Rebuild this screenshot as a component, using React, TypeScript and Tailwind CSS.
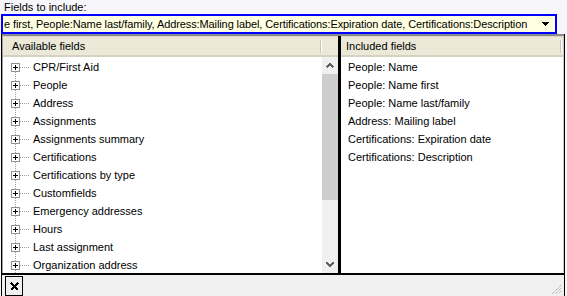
import React from "react";

const leftItems = [
  "CPR/First Aid",
  "People",
  "Address",
  "Assignments",
  "Assignments summary",
  "Certifications",
  "Certifications by type",
  "Customfields",
  "Emergency addresses",
  "Hours",
  "Last assignment",
  "Organization address",
];

const rightItems = [
  "People: Name",
  "People: Name first",
  "People: Name last/family",
  "Address: Mailing label",
  "Certifications: Expiration date",
  "Certifications: Description",
];

function TreeGlyph({ first }: { first: boolean }) {
  return (
    <svg width="28" height="18" className="shrink-0" shapeRendering="crispEdges">
      {!first && (
        <line x1="12.5" y1="0" x2="12.5" y2="5" stroke="#a0a0a0" strokeDasharray="1 1" />
      )}
      <line x1="12.5" y1="14" x2="12.5" y2="18" stroke="#a0a0a0" strokeDasharray="1 1" />
      <line x1="17" y1="9.5" x2="27" y2="9.5" stroke="#a0a0a0" strokeDasharray="1 1" />
      <rect x="8.5" y="5.5" width="8" height="8" fill="#ffffff" stroke="#919191" />
      <line x1="10" y1="9.5" x2="15" y2="9.5" stroke="#000000" />
      <line x1="12.5" y1="7" x2="12.5" y2="12" stroke="#000000" />
    </svg>
  );
}

export default function App() {
  return (
    <div className="w-[567px] h-[296px] bg-[#f7f7fb] font-['Liberation_Sans',Arial,sans-serif] text-[11px] text-black overflow-hidden">
      <div className="h-[14px] pl-[4px] leading-[14px]">Fields to include:</div>
      <div className="ml-[1px] w-[556px] h-[20px] border-2 border-[#0000ff] bg-[#ffffe1] flex items-center">
        <div className="flex-1 overflow-hidden whitespace-nowrap pl-[1px] leading-[16px] tracking-[-0.1px]">
          e first, People:Name last/family, Address:Mailing label, Certifications:Expiration date, Certifications:Description
        </div>
        <div className="w-[18px] h-[16px] flex items-center justify-center">
          <svg width="9" height="5" shapeRendering="crispEdges">
            <polygon points="0,0 7,0 3.5,4" fill="#000" />
          </svg>
        </div>
      </div>
      <div className="ml-[1px] w-[564px] h-[262px] flex flex-col border-x border-black">
        <div className="flex h-[239px] shrink-0 border-t-2 border-[#8a8a8a]">
          {/* Left panel */}
          <div className="w-[336px] flex flex-col border-l border-[#a0a0a0]">
            <div className="h-[21px] shrink-0 bg-[#ebe8d7] border-t border-[#d8d5c6] border-b-2 border-b-[#d6d2c2] flex items-center relative">
              <span className="pl-[9px]">Available fields</span>
              <div className="absolute left-[317px] top-[3px] w-px h-[13px] bg-[#c7c3b3]" />
              <div className="absolute left-[318px] top-[3px] w-px h-[13px] bg-white" />
            </div>
            <div className="flex flex-1 min-h-0 bg-white overflow-hidden">
              <div className="flex-1 flex flex-col pt-[1px] overflow-hidden">
                {leftItems.map((t, i) => (
                  <div key={t} className="h-[18px] shrink-0 flex items-center">
                    <TreeGlyph first={i === 0} />
                    <span className="pl-[2px] leading-[18px]">{t}</span>
                  </div>
                ))}
              </div>
              <div className="w-[16px] bg-[#f0f0f0] flex flex-col">
                <div className="h-[17px] shrink-0 flex items-center justify-center">
                  <svg width="8" height="5" shapeRendering="crispEdges">
                    <polyline points="0.5,4.5 4,1 7.5,4.5" fill="none" stroke="#606060" strokeWidth="1.6" />
                  </svg>
                </div>
                <div className="flex-1 flex flex-col">
                  <div className="h-[126px] bg-[#cdcdcd]" />
                </div>
                <div className="h-[17px] shrink-0 flex items-center justify-center">
                  <svg width="8" height="5" shapeRendering="crispEdges">
                    <polyline points="0.5,0.5 4,4 7.5,0.5" fill="none" stroke="#606060" strokeWidth="1.6" />
                  </svg>
                </div>
              </div>
            </div>
          </div>
          {/* Divider */}
          <div className="w-[3px] bg-black" />
          {/* Right panel */}
          <div className="flex-1 flex flex-col border-r border-[#c8c8c8]">
            <div className="h-[21px] shrink-0 bg-[#ebe8d7] border-t border-[#d8d5c6] border-b-2 border-b-[#d6d2c2] flex items-center relative">
              <span className="pl-[5px]">Included fields</span>
              <div className="absolute right-[2px] top-[3px] w-px h-[13px] bg-[#c7c3b3]" />
              <div className="absolute right-[1px] top-[3px] w-px h-[13px] bg-white" />
            </div>
            <div className="flex-1 bg-white flex flex-col pt-[1px] pl-[7px]">
              {rightItems.map((t) => (
                <div key={t} className="h-[18px] shrink-0 leading-[18px]">
                  {t}
                </div>
              ))}
            </div>
          </div>
        </div>
        <div className="flex-1 border-t-2 border-black bg-[#f0f0f0] relative">
          <div className="absolute left-[3px] top-[1px] w-[18px] h-[20px] border border-black bg-[#f0f0f0] flex items-center justify-center">
            <svg width="9" height="9" shapeRendering="crispEdges">
              <line x1="1" y1="1" x2="8" y2="8" stroke="#000" strokeWidth="1.5" />
              <line x1="8" y1="1" x2="1" y2="8" stroke="#000" strokeWidth="1.5" />
            </svg>
          </div>
          <svg width="12" height="12" className="absolute right-[2px] bottom-[1px]">
            <line x1="11" y1="2" x2="2" y2="11" stroke="#a0a0a0" strokeDasharray="1 1" />
            <line x1="11" y1="5" x2="5" y2="11" stroke="#a0a0a0" strokeDasharray="1 1" />
            <line x1="11" y1="8" x2="8" y2="11" stroke="#a0a0a0" strokeDasharray="1 1" />
          </svg>
        </div>
      </div>
    </div>
  );
}
